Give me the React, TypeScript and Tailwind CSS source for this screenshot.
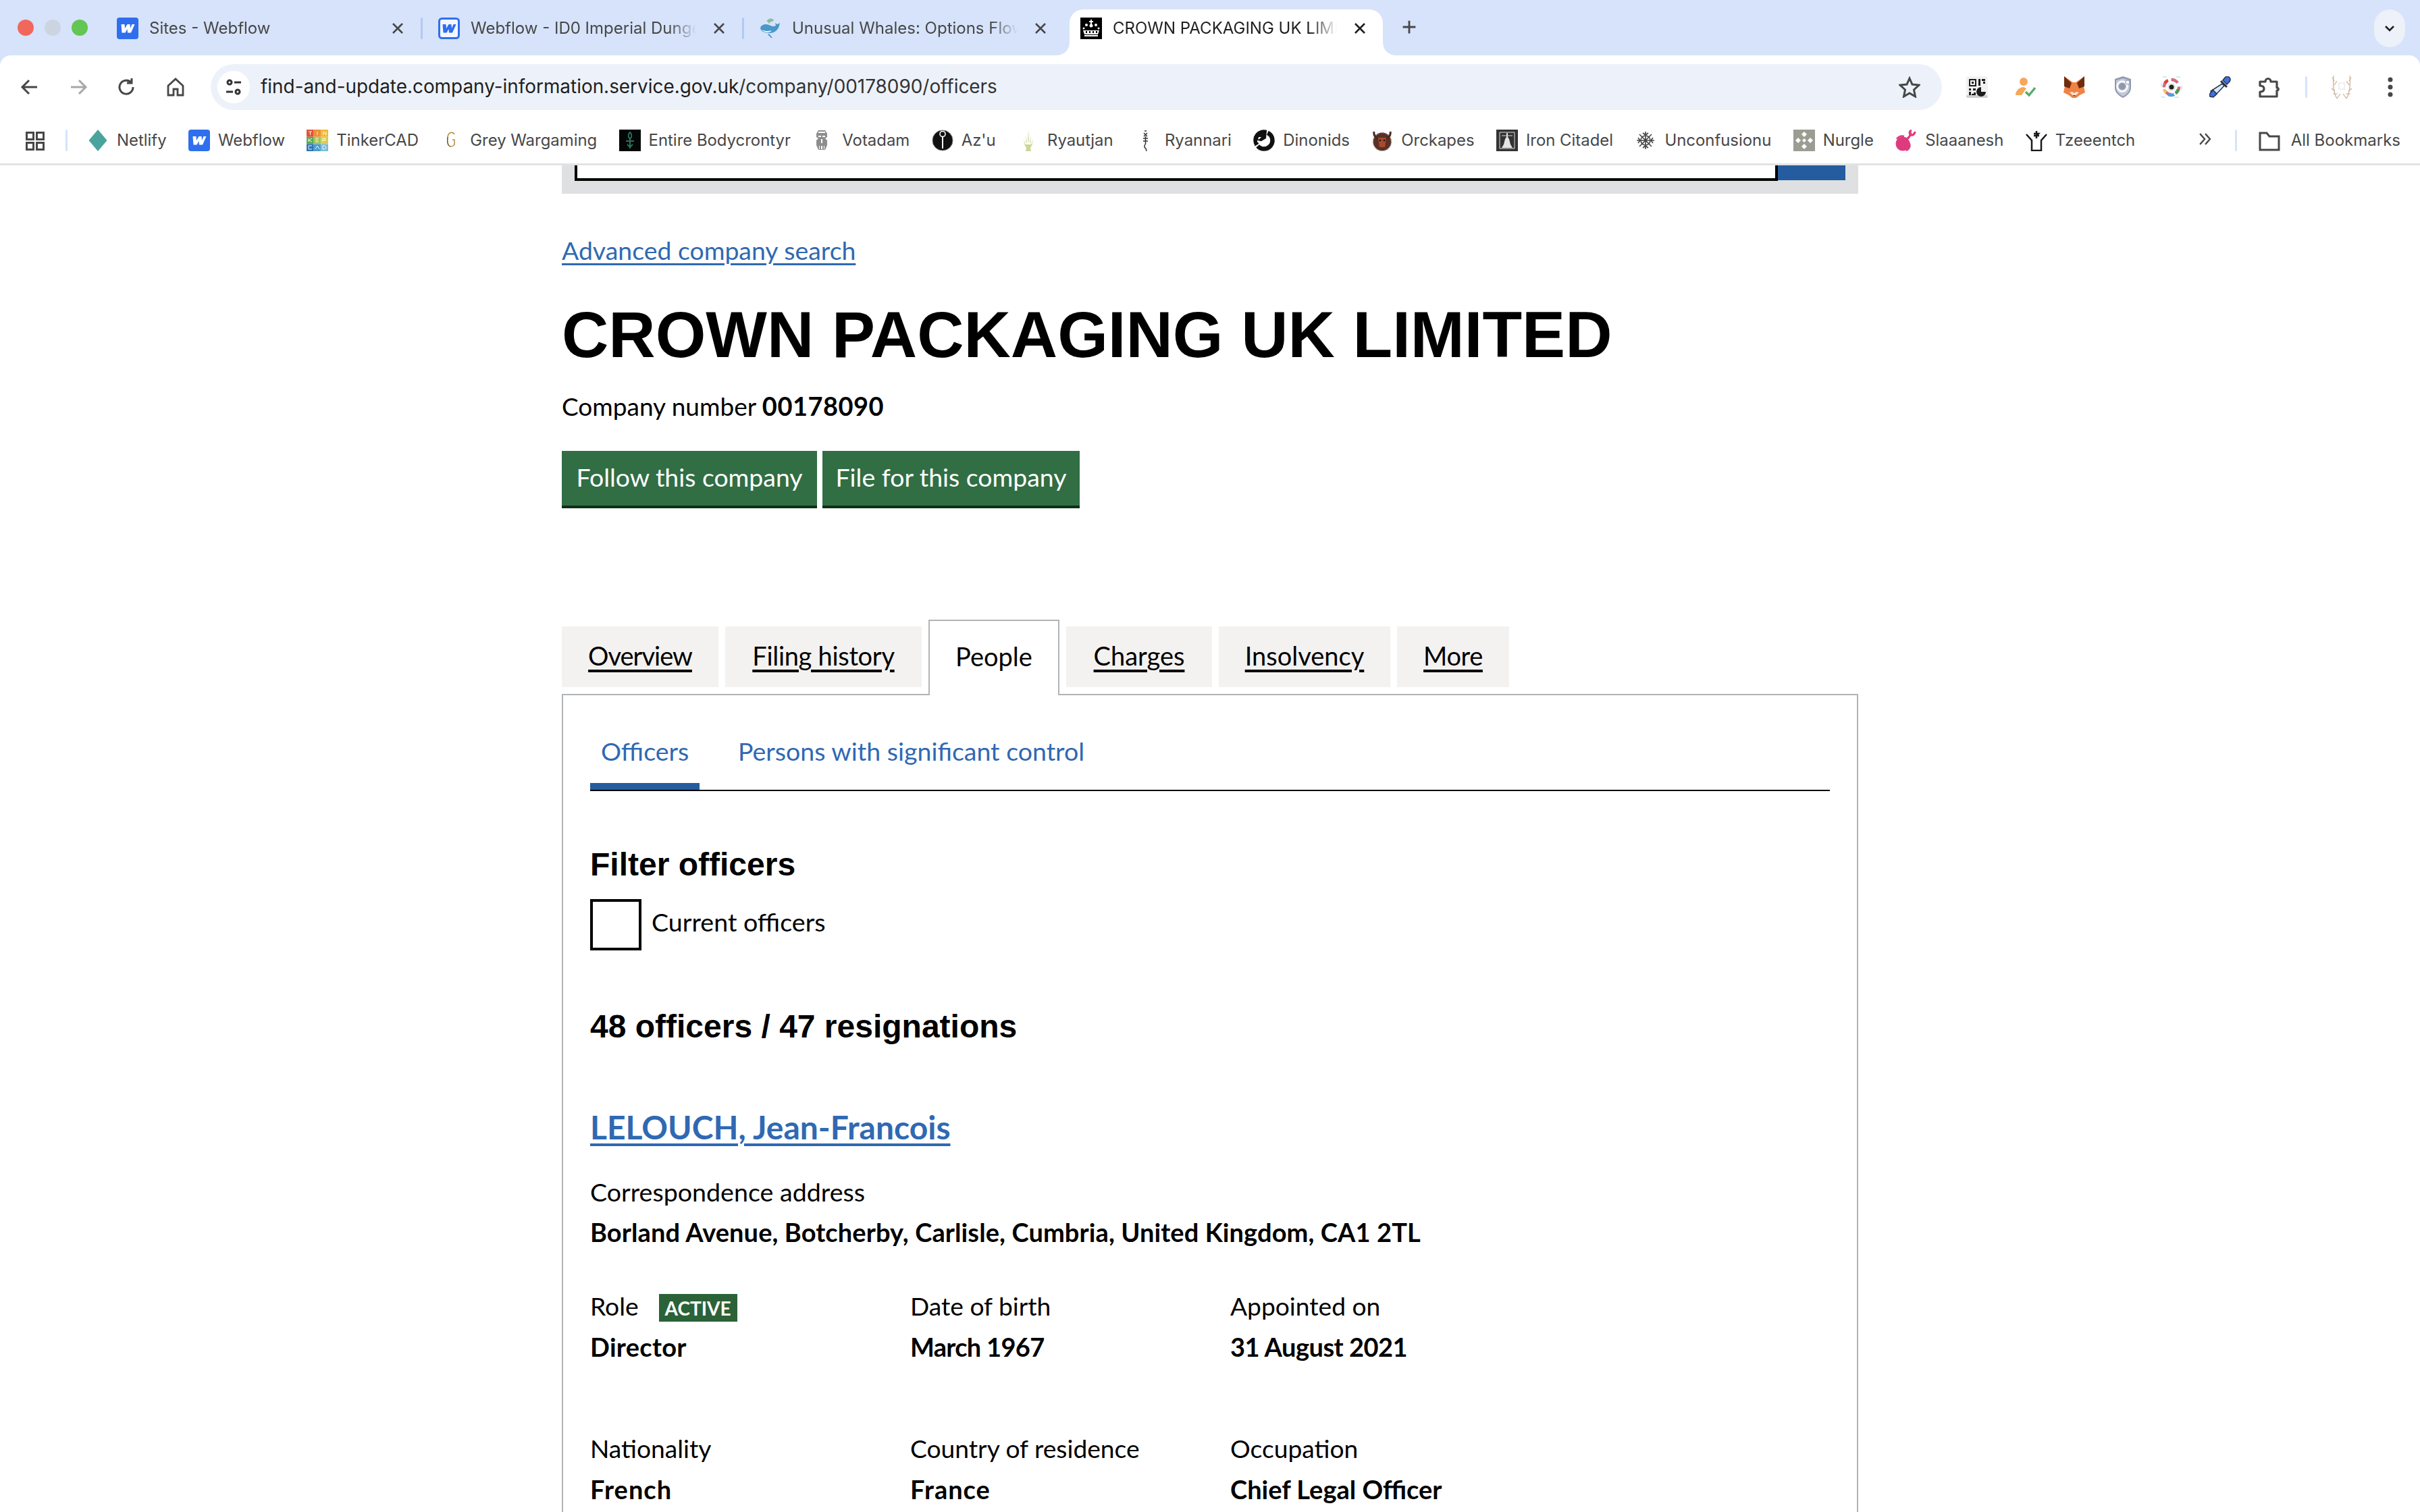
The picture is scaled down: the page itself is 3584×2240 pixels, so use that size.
import React from "react";

const W = ({ outline }: { outline?: boolean }) => (
  <svg width="32" height="32" viewBox="0 0 32 32" className="shrink-0">
    <rect x={outline ? 1.5 : 0} y={outline ? 1.5 : 0} width={outline ? 29 : 32} height={outline ? 29 : 32} rx="4" fill={outline ? "#f4f7ff" : "#2f6fee"} stroke={outline ? "#2f6fee" : "none"} strokeWidth="3" />
    <path d="M9 10h5l.5 6 3.500-6h4l.5 6 2.500-6H29l-5.500 12.500h-5l-.5-5.500-3 5.500h-5z" transform="translate(-2.500 0)" fill={outline ? "#2f6fee" : "#fff"} />
  </svg>
);

const Whale = () => (
  <svg width="32" height="32" viewBox="0 0 32 32" className="shrink-0">
    <path d="M14 2c3-1 6 0 7 2-1 2-5 2-6 3l-1 3-1-3c-2-1-3-2-2-3z" fill="#86bc9b" />
    <path d="M1 15c2-5 8-6 13-4 4 2 7 3 10 1l-1-4 3 2 4-2-1 4c-1 6-7 11-14 11-8 0-14-3-14-8z" fill="#4a97c9" />
    <path d="M3 18c4 2 10 3 15 1-2 4-11 4-15-1z" fill="#eef4fa" />
    <path d="M14 24l5 6-2 0-5-5z" fill="#4a97c9" />
  </svg>
);

const Crown = () => (
  <svg width="32" height="32" viewBox="0 0 32 32" className="shrink-0">
    <rect width="32" height="32" fill="#000" />
    <g fill="#fff">
      <rect x="15" y="3" width="2" height="7" />
      <rect x="13" y="5" width="6" height="2" />
      <circle cx="9" cy="11" r="2" />
      <circle cx="23" cy="11" r="2" />
      <circle cx="16" cy="12" r="2.500" />
      <circle cx="5" cy="16" r="1.500" />
      <circle cx="27" cy="16" r="1.500" />
      <path d="M4 19h24l-2 6H6z" />
      <rect x="6" y="26" width="20" height="2" />
    </g>
    <g fill="#000">
      <rect x="8" y="20" width="2" height="3" />
      <rect x="13" y="20" width="2" height="3" />
      <rect x="18" y="20" width="2" height="3" />
      <rect x="23" y="20" width="2" height="3" />
    </g>
  </svg>
);

const Close = ({ dark }: { dark?: boolean }) => (
  <svg width="20" height="20" viewBox="0 0 20 20" className="shrink-0">
    <path d="M3 3l14 14M17 3L3 17" stroke={dark ? "#1f1f1f" : "#474747"} strokeWidth="2.600" />
  </svg>
);

function Tab({ icon, title, active, sep }: { icon: React.ReactNode; title: string; active?: boolean; sep?: boolean }) {
  return (
    <div className={active ? "relative flex h-[68px] w-[464px] shrink-0 items-start rounded-t-[20px] bg-white pl-[16px] pt-[12px]" : "relative flex h-[68px] w-[476px] shrink-0 items-start pl-[17px] pt-[12px]"}>
      {icon}
      <div className={active ? "ml-[16px] w-[332px] overflow-hidden whitespace-nowrap text-[24px] leading-[32px] text-[#1f1f1f] [mask-image:linear-gradient(to_right,black_88%,transparent)]" : "ml-[16px] w-[334px] overflow-hidden whitespace-nowrap text-[24px] leading-[32px] text-[#474747] [mask-image:linear-gradient(to_right,black_88%,transparent)]"}>
        {title}
      </div>
      <div className="ml-[24px] mt-[6px]"><Close dark={active} /></div>
      {sep && <div className="absolute right-[6px] top-[12px] h-[32px] w-[3px] rounded bg-[#b2c9f3]" />}
      {active && (
        <>
          <svg width="20" height="20" viewBox="0 0 20 20" className="absolute bottom-0 left-[-20px]"><path d="M20 0v20H0c12 0 20-8 20-20z" fill="#fff" /></svg>
          <svg width="20" height="20" viewBox="0 0 20 20" className="absolute bottom-0 right-[-20px]"><path d="M0 0v20h20C8 20 0 12 0 0z" fill="#fff" /></svg>
        </>
      )}
    </div>
  );
}

const Stroke = ({ d, c = "#474747", w = 3, s = 32 }: { d: string; c?: string; w?: number; s?: number }) => (
  <svg width={s} height={s} viewBox="0 0 32 32" fill="none"><path d={d} stroke={c} strokeWidth={w} /></svg>
);

const Btn = ({ children }: { children: React.ReactNode }) => (
  <div className="flex h-[72px] w-[72px] shrink-0 items-center justify-center">{children}</div>
);

const Qr = () => (
  <svg width="32" height="32" viewBox="0 0 32 32">
    <rect width="32" height="32" rx="3" fill="#f1f1f1" />
    <rect y="28" width="32" height="4" rx="2" fill="#cfcfcf" />
    <g fill="#1c1c1c">
      <path d="M4 4h11v11H4zm2 2v7h7V6z" fillRule="evenodd" />
      <rect x="8" y="8" width="3" height="3" />
      <rect x="18" y="4" width="3" height="10" />
      <rect x="23" y="4" width="5" height="3" />
      <rect x="25" y="8" width="3" height="3" />
      <rect x="4" y="18" width="3" height="3" /><rect x="10" y="18" width="4" height="3" /><rect x="4" y="23" width="3" height="5" /><rect x="11" y="24" width="3" height="4" /><rect x="8" y="26" width="3" height="2" />
      <path d="M22 16a7 7 0 1 0 7 7h-7z" />
    </g>
  </svg>
);
const PersonCheck = () => (
  <svg width="32" height="32" viewBox="0 0 32 32">
    <circle cx="13" cy="8" r="6" fill="#f5a85a" />
    <path d="M1 28c0-8 7-12 12-12l4 2-7 10z" fill="#f5a85a" />
    <path d="M16 23l5 5 9-11" stroke="#56ae6c" strokeWidth="3.500" fill="none" />
  </svg>
);
const Fox = () => (
  <svg width="32" height="32" viewBox="0 0 32 32">
    <path d="M1 0l13 9h4L31 0l-1 15 2 9-8 4-5 4h-6l-5-4-8-4 2-9z" fill="#f08244" />
    <path d="M1 0l11 10-3 8-8-3zM31 0L20 10l3 8 8-3z" fill="#6e2c0e" />
    <path d="M9 24l7 6 7-6-4-1-3 2-3-2z" fill="#fbe3d2" />
    <path d="M14 28h4l-2 2z" fill="#333" />
  </svg>
);
const Shield = () => (
  <svg width="32" height="32" viewBox="0 0 32 32">
    <path d="M16 0l12 4v13c0 7-6 12-12 15C10 29 4 24 4 17V4z" fill="#8f98b0" />
    <path d="M16 3l10 3v11c0 6-5 10-10 13C11 27 6 23 6 17V6z" fill="#c4c9d6" />
    <circle cx="15" cy="15" r="7.500" fill="none" stroke="#fff" strokeWidth="2.500" />
    <circle cx="15" cy="15" r="5" fill="#8f98b0" />
    <circle cx="23" cy="9" r="3" fill="#fff" stroke="#8f98b0" />
  </svg>
);
const Cam = () => (
  <svg width="32" height="32" viewBox="0 0 32 32" fill="none">
    <rect x="1" y="1" width="30" height="30" rx="2" stroke="#bfe6f5" strokeDasharray="6 14" strokeWidth="1.500" />
    <circle cx="16" cy="16" r="11" stroke="#cf6f7f" strokeWidth="4.500" strokeDasharray="11 6" />
    <path d="M6 10A11 11 0 0 1 11 6" stroke="#d9453d" strokeWidth="4.500" />
    <path d="M5 19A11 11 0 0 0 8 24" stroke="#f3c45a" strokeWidth="4.500" />
    <path d="M11 27a11 11 0 0 0 9 0" stroke="#4a9fe3" strokeWidth="4.500" />
    <path d="M22 25a11 11 0 0 0 4-6" stroke="#47a04d" strokeWidth="4.500" />
    <circle cx="16" cy="16" r="6" fill="#e6e6e6" />
    <circle cx="16" cy="16" r="3.500" fill="#222" />
  </svg>
);
const Dropper = () => (
  <svg width="32" height="32" viewBox="0 0 32 32">
    <path d="M20 6l3-4c2-2 5-2 7 0s1 5-1 7l-3 3z" fill="#3f70dd" stroke="#263248" strokeWidth="1.500" />
    <path d="M17 7l9 9" stroke="#263248" strokeWidth="3" />
    <path d="M19 11l3 3L9 28l-7-6z" fill="#dce8fb" stroke="#263248" strokeWidth="1.500" />
    <path d="M5 20l6 6-5 5-5-1-1-3z" fill="#3f70dd" stroke="#263248" strokeWidth="1.500" />
  </svg>
);
const Puzzle = () => (
  <svg width="32" height="32" viewBox="0 0 32 32" fill="none">
    <path d="M3 8h8c0-6 8-6 8 0h9v9c3 0 3 4 0 4v9H3v-7c4 0 6-2 6-4.500S7 14 3 14z" stroke="#474747" strokeWidth="3.200" strokeLinejoin="round" />
  </svg>
);
const Antlers = () => (
  <svg width="32" height="36" viewBox="0 0 32 36" fill="none">
    <path d="M9 35C4 27 3 14 4 1M6 24L1 20M5 15l4-6M5 9L2 4M9 35l5-7M23 35c5-8 6-21 5-34M26 24l5-4M27 15l-4-6M27 9l3-5M23 35l-5-7M3 28h7M29 28h-7" stroke="#c9ae95" strokeWidth="1.200" />
    <path d="M12 12h8v9h-8z" stroke="#ececec" strokeWidth="1.600" />
  </svg>
);
const Kebab = () => (
  <svg width="8" height="32" viewBox="0 0 8 32" fill="#474747"><circle cx="4" cy="5" r="3.500" /><circle cx="4" cy="16" r="3.500" /><circle cx="4" cy="27" r="3.500" /></svg>
);

const B = ({ children }: { children: React.ReactNode }) => (
  <svg width="32" height="32" viewBox="0 0 32 32" className="shrink-0">{children}</svg>
);

const bookmarks: { t: string; i: React.ReactNode }[] = [
  { t: "Netlify", i: <B><path d="M16 0l15 16-15 16L1 16z" fill="#4aa39c" transform="translate(16 0) scale(.9 1) translate(-16 0)" /></B> },
  { t: "Webflow", i: <W /> },
  { t: "TinkerCAD", i: <B>
      <rect width="10.700" height="10.700" fill="#e2533a" /><rect x="10.700" width="10.700" height="10.700" fill="#ef8f33" /><rect x="21.400" width="10.700" height="10.700" fill="#f2b92f" />
      <rect y="10.700" width="10.700" height="10.700" fill="#5aa85a" /><rect x="10.700" y="10.700" width="10.700" height="10.700" fill="#a3c45a" /><rect x="21.400" y="10.700" width="10.700" height="10.700" fill="#d9cc4f" />
      <rect y="21.400" width="10.700" height="10.700" fill="#2f74b5" /><rect x="10.700" y="21.400" width="10.700" height="10.700" fill="#4e9ec9" /><rect x="21.400" y="21.400" width="10.700" height="10.700" fill="#7bbcd6" />
      <path d="M3 3h5M5.500 3v5M16 3v5M25 8V3l4 5V3M3 13v5M3 16l5-3M3 16l5 2M13 13h5M13 15.500h4M13 18h5M24 18v-5h4v3h-4M3 24h5M3 24v5h5M13 29l3-5 3 5M24 24v5h3l2-2v-1l-2-2z" fill="none" stroke="#fff" strokeWidth=".9" />
    </B> },
  { t: "Grey Wargaming", i: <B><path d="M21 7c-2-4-9-4-10 4s0 13 4 14c3 0 5-1 6-3v-7h-3" fill="none" stroke="#b39446" strokeWidth="1.600" /><path d="M11 11c-1 8 0 13 4 14" fill="none" stroke="#444" strokeWidth="1" /></B> },
  { t: "Entire Bodycrontyr", i: <B><rect width="32" height="32" fill="#020605" /><path d="M16 4c-3 3-3 7 0 10 3-3 3-7 0-10zM16 14v14M10 17h12M12 22l4 4 4-4" fill="none" stroke="#2f6f60" strokeWidth="2" /></B> },
  { t: "Votadam", i: <B><g transform="translate(2 0)" fill="#8d8d8d"><path d="M7 1h10l3 5v5l-3 2 3 3v7l-3 7H7l-3-7v-7l3-3-3-2V6z" /><path d="M7 9h4v2H7zM13 9h4v2h-4zM11 14h2v6h-2zM8 24h1v5H8zM11 24h2v5h-2zM15 24h1v5h-1zM7 3h10v2H7z" fill="#fff" /></g></B> },
  { t: "Az'u", i: <B><circle cx="16" cy="16" r="15" fill="#111" stroke="#777" strokeWidth="1" /><circle cx="16" cy="6.500" r="4" fill="none" stroke="#fff" strokeWidth="1.600" /><path d="M16 10v18" stroke="#fff" strokeWidth="2" /></B> },
  { t: "Ryautjan", i: <B><path d="M16 0l1.500 18h-3zM12 8l2 12h-2zM20 8l-2 12h2zM9 14l3 8-2 0zM23 14l-3 8 2 0z" fill="#dfe6c0" /><path d="M10 22h12l-3 5 1 5h-8l1-5z" fill="#cdd599" /></B> },
  { t: "Ryannari", i: <B><path d="M14 2l3 0M13 5l5 5M18 5l-5 5M12 13h7M15.500 10v12M12 17h7M15 22c-2 3-1 5 1 6l1 4" fill="none" stroke="#333" strokeWidth="1.500" /></B> },
  { t: "Dinonids", i: <B><circle cx="16" cy="16" r="12.500" fill="none" stroke="#111" strokeWidth="6.500" strokeDasharray="30 2" /><path d="M0 11l11-3 9-7-1 12-10 6-7-3 7-2 3-3z" fill="#111" /><path d="M6 17l10 3 5-5" stroke="#fff" strokeWidth="2.500" fill="none" /></B> },
  { t: "Orckapes", i: <B><circle cx="16" cy="18" r="13.500" fill="#5c3024" stroke="#999" strokeWidth="1.500" strokeDasharray="2 2" /><path d="M4 3c-1 5 2 9 8 11M28 3c1 5-2 9-8 11" stroke="#4a2a20" strokeWidth="3" fill="none" /><path d="M10 12h12l-2 14h-8z" fill="#a84a2e" /><circle cx="13" cy="16" r="1.300" fill="#111" /><circle cx="19" cy="16" r="1.300" fill="#111" /></B> },
  { t: "Iron Citadel", i: <B><rect width="32" height="32" fill="#333" /><path d="M5 4h22v24H5z" fill="none" stroke="#ddd" strokeWidth="1" /><path d="M15 5h2v6l2 3 2 8 3 5H8l3-5 2-8 2-3z" fill="#e4e4e4" /><path d="M8 9h16" stroke="#ddd" /></B> },
  { t: "Unconfusionu", i: <B><path d="M16 3v26M3 16h26M7 7l18 18M25 7L7 25M12 5l4 3 4-3M12 27l4-3 4 3M5 12l3 4-3 4M27 12l-3 4 3 4" fill="none" stroke="#444" strokeWidth="1.600" /><circle cx="16" cy="16" r="7" fill="none" stroke="#444" strokeWidth="1.600" /></B> },
  { t: "Nurgle", i: <B><rect width="32" height="32" fill="#9b9c92" /><g fill="#fff"><path d="M16 3l4 4-4 4-4-4zM16 21l4 4-4 4-4-4zM7 12l4 4-4 4-4-4zM25 12l4 4-4 4-4-4zM16 13l3 3-3 3-3-3z" /></g></B> },
  { t: "Slaaanesh", i: <B><circle cx="11" cy="21" r="10.500" fill="#de3b7e" /><path d="M14 15c5-1 8-5 9-11M24 1c-3 1-4 5-1 7 3 1 6-2 6-5" stroke="#de3b7e" strokeWidth="3.200" fill="none" /><path d="M2 14c3-4 7-5 11-4" stroke="#de3b7e" strokeWidth="2.500" fill="none" /><path d="M19 18c4 4 3 10-3 13" stroke="#de3b7e" strokeWidth="2.500" fill="none" /></B> },
  { t: "Tzeeentch", i: <B><path d="M1 7l8 9v15h14V16l8-9M16 2v11M12 6h7l-3 3h-4M12 9h8" fill="none" stroke="#1a1a1a" strokeWidth="2.500" /></B> },
];

const Bookmark = ({ t, i }: { t: string; i: React.ReactNode }) => (
  <div className="flex shrink-0 items-center gap-[12px]">
    {i}
    <span className="whitespace-nowrap text-[23.9px] leading-[32px] text-[#474747]">{t}</span>
  </div>
);

const Chrome = () => (
  <div className="shrink-0 bg-[#d6e3fa] font-['Inter',sans-serif]">
    <div className="relative flex h-[82px] pt-[14px]">
      <div className="flex w-[156px] shrink-0 items-start gap-[16px] pl-[26px] pt-[15px]">
        <div className="h-[24px] w-[24px] rounded-full bg-[#f0685c]" />
        <div className="h-[24px] w-[24px] rounded-full bg-[#ccd4e2]" />
        <div className="h-[24px] w-[24px] rounded-full bg-[#62c554]" />
      </div>
      <Tab icon={<W />} title="Sites - Webflow" sep />
      <Tab icon={<W outline />} title="Webflow - ID0 Imperial Dungeons" sep />
      <Tab icon={<Whale />} title="Unusual Whales: Options Flow" />
      <Tab icon={<Crown />} title="CROWN PACKAGING UK LIMITED" active />
      <div className="ml-[24px] pt-[11px]"><Stroke d="M16 6v20M6 16h20" w={3} s={30} /></div>
      <div className="ml-auto mr-[22px] flex h-[56px] w-[46px] items-center justify-center rounded-[23px] bg-[#ecf1fa]">
        <Stroke d="M8 12l8 8 8-8" c="#1f1f1f" w={3.500} s={24} />
      </div>
    </div>
    <div className="rounded-t-[16px] bg-white">
      <div className="flex h-[94px] items-center pl-[8px]">
        <Btn><Stroke d="M27 16H6M15 6L5 16l10 10" /></Btn>
        <Btn><Stroke d="M5 16h21M17 6l10 10-10 10" c="#a8a8a8" /></Btn>
        <Btn><Stroke d="M25 16a10 10 0 1 1-3-7M23 3v7h-7" /></Btn>
        <Btn><Stroke d="M5 14L16 4l11 10v14h-8v-9h-6v9H5z" w={2.800} /></Btn>
        <div className="ml-[16px] flex h-[68px] w-[2564px] shrink-0 items-center rounded-full bg-[#edf2fa] pl-[10px]">
          <div className="flex h-[48px] w-[48px] items-center justify-center rounded-full bg-white">
            <svg width="24" height="28" viewBox="0 0 24 28" fill="none" stroke="#333" strokeWidth="3"><circle cx="6" cy="7" r="3" /><path d="M13 7h10M1 21h10" /><circle cx="18" cy="21" r="3" /></svg>
          </div>
          <div className="ml-[16px] whitespace-nowrap text-[27.9px] text-[#1f1f1f]">
            find-and-update.company-information.service.gov.uk<span className="text-[#333]">/company/00178090/officers</span>
          </div>
          <div className="ml-auto mr-[32px]"><Stroke d="M16 3l4 9 10 1-7.500 7 2 10-8.500-5-8.500 5 2-10L2 13l10-1z" w={3} /></div>
        </div>
        <div className="ml-[16px] flex">
          <Btn><Qr /></Btn><Btn><PersonCheck /></Btn><Btn><Fox /></Btn><Btn><Shield /></Btn><Btn><Cam /></Btn><Btn><Dropper /></Btn><Btn><Puzzle /></Btn>
        </div>
        <div className="ml-[18px] h-[32px] w-[3px] shrink-0 rounded bg-[#d6e3fa]" />
        <div className="ml-[15px]"><Btn><Antlers /></Btn></div>
        <Btn><Kebab /></Btn>
      </div>
      <div className="flex h-[69px] items-start border-b-[3px] border-[#e3e3e3] pl-[38px] pt-[16px]">
        <svg width="28" height="32" viewBox="0 0 28 32" fill="none" stroke="#474747" strokeWidth="3" className="shrink-0"><rect x="1.500" y="4.500" width="10" height="10" /><rect x="16.500" y="4.500" width="10" height="10" /><rect x="1.500" y="19.500" width="10" height="10" /><rect x="16.500" y="19.500" width="10" height="10" /></svg>
        <div className="ml-[31px] h-[32px] w-[3px] shrink-0 rounded bg-[#d6e3fa]" />
        <div className="ml-[29px] flex gap-[32.4px]">
          {bookmarks.map((b) => <Bookmark key={b.t} t={b.t} i={b.i} />)}
        </div>
        <div className="ml-auto flex items-start">
          <Stroke d="M7 7l8 9-8 9M16 7l8 9-8 9" w={2.600} s={28} />
          <div className="ml-[30px] h-[32px] w-[3px] shrink-0 rounded bg-[#d6e3fa]" />
          <div className="ml-[32px] flex items-center gap-[16px] pr-[29px]">
            <Stroke d="M2 5h10l4 5h14v20H2z" w={3} />
            <span className="whitespace-nowrap text-[24px] leading-[32px] text-[#474747]">All Bookmarks</span>
          </div>
        </div>
      </div>
    </div>
  </div>
);

const NavTab = ({ cls, label }: { cls: string; label: string }) => (
  <div className={`mt-[10px] flex h-[90px] ${cls} shrink-0 items-center justify-center bg-[#f3f2f1] pb-[4px] text-[38px] text-black underline decoration-[4px] underline-offset-[6px]`}>{label}</div>
);

const Field = ({ label, value, badge, track }: { label: string; value: string; badge?: boolean; track?: string }) => (
  <div>
    <div className="flex h-[50px] items-center text-[37.2px] text-black">
      {label}
      {badge && <span className="ml-[30px] mt-[5px] flex h-[41px] w-[116px] items-center justify-center bg-[#2b6238] text-[28px] font-bold text-white">ACTIVE</span>}
    </div>
    <div className={`mt-[10px] h-[50px] text-[38px] font-bold leading-[50px] text-black ${track ?? ""}`}>{value}</div>
  </div>
);

export default function App() {
  return (
    <div className="flex h-[2240px] w-[3584px] flex-col overflow-hidden bg-white">
      <Chrome />
      <main className="mx-auto w-[1920px] font-['Lato',sans-serif]">
        <div className="flex h-[42px] items-start justify-between bg-[#dee0e2] px-[19px]">
          <div className="h-[23px] w-[1782px] border-x-4 border-b-4 border-black bg-white" />
          <div className="h-[22px] w-[100px] bg-[#245c9f]" />
        </div>
        <a className="mt-[59px] block text-[37.4px] leading-[50px] text-[#2f69b2] underline decoration-[3px] underline-offset-[5px]">Advanced company search</a>
        <h1 className="mt-[45px] whitespace-nowrap font-['Liberation_Sans',sans-serif] text-[96px] font-bold leading-[110px] text-black">CROWN PACKAGING UK LIMITED</h1>
        <p className="mt-[25px] text-[37px] leading-[50px] text-black">Company number <strong className="text-[38px] font-bold tracking-[0.5px]">00178090</strong></p>
        <div className="mt-[41px] flex gap-[8px]">
          <div className="flex h-[85px] w-[378px] items-center justify-center border-b-4 border-[#0e2f17] bg-[#316e44] pb-[2px] text-[37.4px] text-white">Follow this company</div>
          <div className="flex h-[85px] w-[381px] items-center justify-center border-b-4 border-[#0e2f17] bg-[#316e44] pb-[2px] text-[37.4px] text-white">File for this company</div>
        </div>
        <div className="mt-[165px] flex h-[112px] gap-[10px]">
          <NavTab cls="w-[232px] tracking-[-1px]" label="Overview" />
          <NavTab cls="w-[291px] tracking-[-0.3px]" label="Filing history" />
          <div className="relative z-10 flex h-[112px] w-[194px] shrink-0 items-start justify-center border-2 border-b-0 border-[#b1b4b6] bg-white pt-[27px] text-[38px] leading-[50px] text-black">People</div>
          <NavTab cls="w-[216px]" label="Charges" />
          <NavTab cls="w-[254px]" label="Insolvency" />
          <NavTab cls="w-[166px] tracking-[-0.4px]" label="More" />
        </div>
        <section className="-mt-[2px] h-[1300px] border-2 border-[#b1b4b6] px-[40px]">
          <div className="flex items-end border-b-2 border-black pt-[58px] text-[37.5px] leading-[50px] text-[#2f69b2]">
            <div className="w-[162px] border-b-[10px] border-[#245c9f] pb-[22px] pl-[16px]">Officers</div>
            <div className="ml-[57px] pb-[32px]">Persons with significant control</div>
          </div>
          <h2 className="mt-[81px] font-['Liberation_Sans',sans-serif] text-[48px] font-bold leading-[56px] text-black">Filter officers</h2>
          <div className="mt-[23px] flex items-center gap-[15px]">
            <div className="h-[76px] w-[76px] border-4 border-black" />
            <span className="pb-[8px] text-[37.6px] text-black">Current officers</span>
          </div>
          <h2 className="mt-[85px] font-['Liberation_Sans',sans-serif] text-[48px] font-bold leading-[56px] text-black">48 officers / 47 resignations</h2>
          <a className="mt-[91px] block text-[48px] font-bold leading-[60px] text-[#2f69b2] underline decoration-[4px] underline-offset-[6px]">LELOUCH, Jean-Francois</a>
          <div className="mt-[41px] text-[37.6px] leading-[50px] text-black">Correspondence address</div>
          <div className="mt-[9px] text-[38px] font-bold leading-[50px] tracking-[0.1px] text-black">Borland Avenue, Botcherby, Carlisle, Cumbria, United Kingdom, CA1 2TL</div>
          <div className="mt-[60px] grid grid-cols-[474px_474px_1fr]">
            <Field label="Role" value="Director" badge track="tracking-[0.3px]" />
            <Field label="Date of birth" value="March 1967" track="tracking-[-0.7px]" />
            <Field label="Appointed on" value="31 August 2021" track="tracking-[-0.5px]" />
          </div>
          <div className="mt-[101px] grid grid-cols-[474px_474px_1fr]">
            <Field label="Nationality" value="French" track="tracking-[1px]" />
            <Field label="Country of residence" value="France" track="tracking-[1px]" />
            <Field label="Occupation" value="Chief Legal Officer" />
          </div>
        </section>
      </main>
    </div>
  );
}
